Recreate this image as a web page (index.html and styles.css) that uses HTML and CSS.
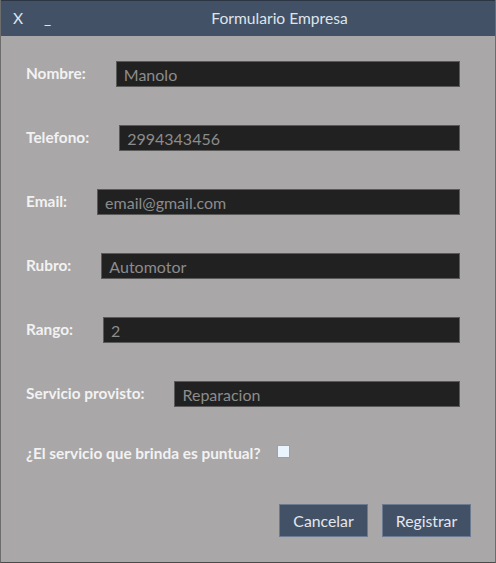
FILE: index.html
```html
<!DOCTYPE html>
<html lang="es">
<head>
<meta charset="utf-8">
<title>Formulario Empresa</title>
<link rel="stylesheet" href="styles.css">
</head>
<body>
<div class="window">
  <div class="titlebar">
    <span class="tb-btn tb-close">X</span>
    <span class="tb-btn tb-min">_</span>
    <span class="tb-title">Formulario Empresa</span>
  </div>
  <div class="form">
    <div class="row">
      <span class="label">Nombre:</span>
      <div class="input">Manolo</div>
    </div>
    <div class="row">
      <span class="label">Telefono:</span>
      <div class="input">2994343456</div>
    </div>
    <div class="row">
      <span class="label">Email:</span>
      <div class="input">email@gmail.com</div>
    </div>
    <div class="row">
      <span class="label">Rubro:</span>
      <div class="input">Automotor</div>
    </div>
    <div class="row">
      <span class="label">Rango:</span>
      <div class="input">2</div>
    </div>
    <div class="row">
      <span class="label">Servicio provisto:</span>
      <div class="input">Reparacion</div>
    </div>
    <div class="row check-row">
      <span class="label">¿El servicio que brinda es puntual?</span>
      <span class="checkbox"></span>
    </div>
    <div class="actions">
      <button class="btn">Cancelar</button>
      <button class="btn">Registrar</button>
    </div>
  </div>
</div>
</body>
</html>
```
FILE: styles.css
```css
html, body {
  margin: 0;
  padding: 0;
}
body {
  width: 496px;
  height: 563px;
  font-family: "Lato", "Noto Sans", sans-serif;
  font-size: 15px;
  background: #a9a7a8;
}
.window {
  box-sizing: border-box;
  width: 496px;
  height: 563px;
  background: #a9a7a8;
  border-left: 1px solid #6e6d6e;
  border-right: 1px solid #6e6d6e;
  border-bottom: 1px solid #4a4a4a;
  display: flex;
  flex-direction: column;
}
.titlebar {
  height: 36px;
  flex: none;
  background: #435166;
  border-top: 1px solid #2c3544;
  box-sizing: border-box;
  color: #dfe4ec;
  position: relative;
  display: flex;
  align-items: center;
  font-size: 15.6px;
}
.tb-btn {
  width: 20px;
  position: relative;
  top: -1px;
}
.tb-close {
  margin-left: 12px;
}
.tb-min {
  margin-left: 11px;
}
.tb-title {
  position: absolute;
  left: 0;
  right: 0;
  top: 8px;
  text-align: center;
  padding-left: 63px;
  pointer-events: none;
}
.form {
  padding: 25px 35px 0 25px;
  display: flex;
  flex-direction: column;
  gap: 38px;
}
.row {
  display: flex;
  align-items: center;
  height: 26px;
}
.label {
  color: #f2f2f2;
  font-weight: 700;
  font-size: 15.4px;
  white-space: nowrap;
  position: relative;
  top: -1px;
}
.input {
  flex: 1;
  margin-left: 30px;
  height: 26px;
  box-sizing: border-box;
  background: #212121;
  border: 1px solid #5a5a5a;
  color: #8c8c8c;
  font-size: 16px;
  padding: 0 7px;
  display: flex;
  align-items: center;
}
.check-row {
  margin-top: -4px;
}
.checkbox {
  width: 13px;
  height: 13px;
  box-sizing: border-box;
  margin-left: 16px;
  margin-top: -6px;
  background: #eaf4ff;
  border: 1px solid #8ea4c4;
}
.actions {
  display: flex;
  justify-content: flex-end;
  gap: 14px;
  margin-top: -1px;
  margin-right: -11px;
}
.btn {
  width: 89px;
  height: 33px;
  background: #435166;
  border: 1px solid #6c7b91;
  color: #e3e7ee;
  font-family: inherit;
  font-size: 15.8px;
  padding: 0;
}
```
